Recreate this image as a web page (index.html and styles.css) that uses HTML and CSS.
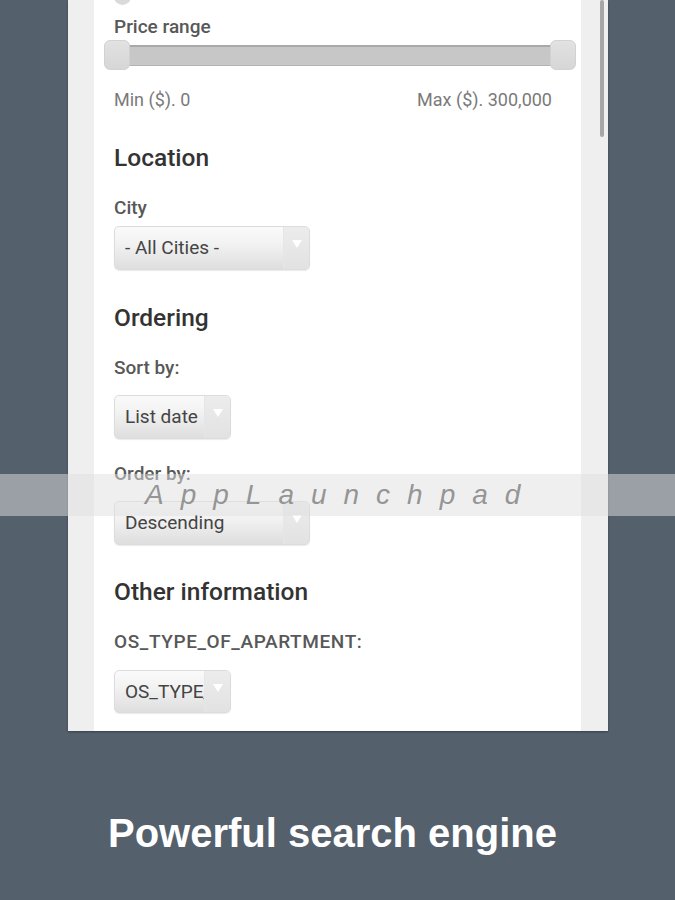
FILE: index.html
```html
<!DOCTYPE html>
<html>
<head>
<meta charset="utf-8">
<link rel="stylesheet" href="styles.css">
</head>
<body>
<div class="page">
  <div class="device">
    <div class="gutter-left"></div>
    <div class="content">
      <div class="dot"></div>
      <div class="label first">Price range</div>
      <div class="slider">
        <div class="handle"></div>
        <div class="track"></div>
        <div class="handle"></div>
      </div>
      <div class="minmax">
        <span>Min ($). 0</span>
        <span>Max ($). 300,000</span>
      </div>

      <div class="heading">Location</div>
      <div class="label">City</div>
      <div class="select wide close">
        <span class="sel-text">- All Cities -</span>
        <span class="sel-arrow"><span class="tri"></span></span>
      </div>

      <div class="heading">Ordering</div>
      <div class="label">Sort by:</div>
      <div class="select narrow">
        <span class="sel-text">List date</span>
        <span class="sel-arrow"><span class="tri"></span></span>
      </div>
      <div class="label mid">Order by:</div>
      <div class="select wide">
        <span class="sel-text">Descending</span>
        <span class="sel-arrow"><span class="tri"></span></span>
      </div>

      <div class="heading other">Other information</div>
      <div class="label caps">OS_TYPE_OF_APARTMENT:</div>
      <div class="select narrow last">
        <span class="sel-text">OS_TYPE_OF_APARTMENT</span>
        <span class="sel-arrow"><span class="tri"></span></span>
      </div>
    </div>
    <div class="gutter-right">
      <div class="thumb"></div>
    </div>
  </div>
  <h1 class="caption">Powerful search engine</h1>
  <div class="watermark"><span>AppLaunchpad</span></div>
</div>
</body>
</html>
```

FILE: styles.css
```css
html, body {
  margin: 0;
  padding: 0;
}
body {
  background: #55606d;
  width: 675px;
  height: 900px;
  overflow: hidden;
  font-family: Roboto, "Liberation Sans", Arial, sans-serif;
}
.page {
  position: relative;
  width: 675px;
  height: 900px;
}
.device {
  margin-left: 68px;
  width: 540px;
  height: 731px;
  display: flex;
  background: #efefef;
  box-shadow: 0 1px 2px rgba(0, 0, 0, 0.35);
  overflow: hidden;
}
.gutter-left {
  width: 26px;
  flex: none;
  background: #efefef;
}
.content {
  width: 487px;
  flex: none;
  background: #ffffff;
  padding-left: 20px;
  box-sizing: border-box;
}
.gutter-right {
  flex: 1;
  background: #efefef;
  padding-left: 19px;
  box-sizing: border-box;
}
.thumb {
  width: 4px;
  height: 137px;
  background: #a6a6a6;
  border-radius: 2px;
}
.dot {
  width: 17px;
  height: 17px;
  border-radius: 50%;
  background: #dadada;
  margin-top: -12px;
}
.label {
  font-size: 19px;
  line-height: 22px;
  font-weight: 500;
  color: #585858;
  margin-top: 25px;
}
.label.caps {
  letter-spacing: 0.6px;
}
.label.first {
  margin-top: 11px;
}
.label.mid {
  margin-top: 24px;
}
.slider {
  margin-top: 2px;
  margin-left: -10px;
  width: 472px;
  height: 30px;
  display: flex;
  align-items: center;
}
.handle {
  width: 26px;
  height: 30px;
  flex: none;
  border-radius: 6px;
  background: linear-gradient(#e2e2e2, #d6d6d6);
  border: 1px solid #d2d2d2;
  box-sizing: border-box;
  position: relative;
  z-index: 1;
}
.track {
  flex: 1;
  height: 21px;
  margin: 0 -2px;
  background: #c7c7c7;
  border-top: 2px solid #a9a9a9;
  border-bottom: 1px solid #b4b4b4;
  box-sizing: border-box;
}
.minmax {
  margin-top: 20px;
  width: 438px;
  display: flex;
  justify-content: space-between;
  font-size: 18px;
  line-height: 20px;
  color: #7a7a7a;
  font-weight: 400;
}
.heading {
  font-size: 24.5px;
  line-height: 28px;
  font-weight: 500;
  color: #333333;
  margin-top: 34px;
}
.heading.other {
  margin-top: 33px;
}
.select {
  margin-top: 16px;
  height: 44px;
  display: flex;
  border-radius: 5px;
  border: 1px solid #dcdcdc;
  box-sizing: border-box;
  background: linear-gradient(#fafafa, #f2f2f2 40%, #dedede);
  box-shadow: 0 1px 1px rgba(0, 0, 0, 0.08);
  overflow: hidden;
}
.select.close {
  margin-top: 7px;
}
.select.last {
  margin-top: 17px;
  height: 43px;
}
.select.wide {
  width: 196px;
}
.select.narrow {
  width: 117px;
}
.sel-text {
  flex: 1;
  min-width: 0;
  overflow: hidden;
  white-space: nowrap;
  padding-left: 10px;
  font-size: 19px;
  line-height: 42px;
  color: #444444;
}
.sel-arrow {
  width: 26px;
  flex: none;
  background: linear-gradient(#ececec, #e2e2e2);
  border-left: 1px solid #e6e6e6;
  display: flex;
  justify-content: center;
  padding-top: 13px;
  box-sizing: border-box;
}
.tri {
  width: 0;
  height: 0;
  border-left: 5px solid transparent;
  border-right: 5px solid transparent;
  border-top: 8px solid #ffffff;
}
.caption {
  margin: 80px 0 0 0;
  padding-right: 10px;
  text-align: center;
  color: #ffffff;
  font-family: "Liberation Sans", Arial, sans-serif;
  font-weight: bold;
  font-size: 40px;
  line-height: 44px;
}
.watermark {
  position: absolute;
  left: 0;
  top: 474px;
  width: 675px;
  height: 42px;
  background: rgba(224, 224, 224, 0.5);
}
.watermark span {
  position: absolute;
  left: 145px;
  top: 3px;
  font-family: "Liberation Sans", Arial, sans-serif;
  font-style: italic;
  font-size: 28px;
  line-height: 36px;
  letter-spacing: 17px;
  color: rgba(125, 125, 125, 0.8);
}
```
